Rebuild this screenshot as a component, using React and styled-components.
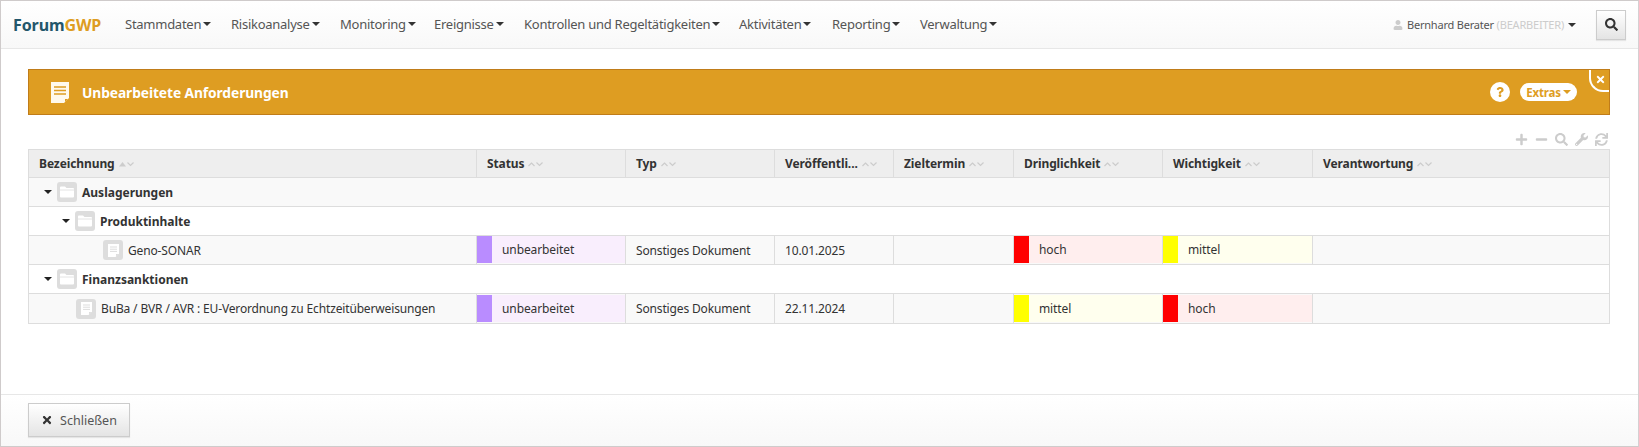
import React from "react";
import styled, { createGlobalStyle } from "styled-components";
import {
  FaUser,
  FaSearch,
  FaTimes,
  FaPlus,
  FaMinus,
  FaWrench,
  FaSync,
  FaQuestion,
} from "react-icons/fa";

const GlobalStyle = createGlobalStyle`
  html, body {
    margin: 0;
    padding: 0;
    background: #fff;
  }
  body {
    font-family: "Noto Sans", "Open Sans", sans-serif;
    font-size: 13px;
    color: #333;
  }
  * { box-sizing: border-box; }
`;

const Page = styled.div`
  height: 447px;
  display: flex;
  flex-direction: column;
  border: 1px solid #cfcbcb;
  border-right-color: #d5d0d2;
`;

const Navbar = styled.nav`
  height: 48px;
  flex: none;
  display: flex;
  align-items: center;
  padding: 0 12px 0 12px;
  background: linear-gradient(#fff, #f8f8f8);
  border-bottom: 1px solid #e7e7e7;
`;

const Brand = styled.div`
  width: 112px;
  font-size: 16px;
  font-weight: 700;
  color: #23566b;
  letter-spacing: -0.1px;
  span {
    color: #de9d22;
  }
`;

const NavItems = styled.div`
  display: flex;
  flex: 1;
  padding-bottom: 2px;
`;

const NavItem = styled.div`
  width: ${(p) => p.$w}px;
  display: flex;
  align-items: center;
  font-size: 13px;
  letter-spacing: -0.26px;
  color: #555;
  white-space: nowrap;
`;

const Caret = styled.span`
  width: 0;
  height: 0;
  flex: none;
  margin-left: ${(p) => p.$gap ?? 2}px;
  border-top: 4px solid ${(p) => p.$color || "#333"};
  border-left: 4px solid transparent;
  border-right: 4px solid transparent;
`;

const UserMenu = styled.div`
  display: flex;
  align-items: center;
  gap: 4px;
  font-size: 11px;
  letter-spacing: -0.2px;
  color: #555;
  margin-right: 20px;
  em {
    font-style: normal;
    color: #ccc;
  }
  svg {
    color: #ccc;
    font-size: 10px;
  }
`;

const SearchButton = styled.button`
  width: 30px;
  height: 30px;
  padding: 0;
  display: flex;
  align-items: center;
  justify-content: center;
  border: 1px solid #ccc;
  background: linear-gradient(#fff, #e4e4e4);
  box-shadow: 0 1px 1px rgba(0, 0, 0, 0.08);
  color: #333;
  font-size: 13px;
`;

const Content = styled.main`
  flex: 1;
  padding: 20px 28px 0 27px;
`;

const Panel = styled.header`
  position: relative;
  height: 46px;
  display: flex;
  align-items: center;
  padding: 0 32px 0 22px;
  background: #de9d22;
  border: 1px solid #c07c19;
  overflow: hidden;
`;

const PanelTitle = styled.h1`
  flex: 1;
  margin: 0 0 0 13px;
  font-size: 13.8px;
  font-weight: 700;
  letter-spacing: -0.1px;
  color: #fff;
`;

const HelpBadge = styled.span`
  width: 20px;
  height: 20px;
  border-radius: 50%;
  background: #fff;
  color: #de9d22;
  display: flex;
  align-items: center;
  justify-content: center;
  font-size: 10px;
  margin-right: 10px;
`;

const ExtrasBadge = styled.span`
  width: 57px;
  height: 18px;
  border-radius: 9px;
  background: #fff;
  color: #de9d22;
  font-size: 11.5px;
  font-weight: 700;
  letter-spacing: -0.2px;
  display: flex;
  align-items: center;
  justify-content: center;
`;

const CloseNotch = styled.span`
  position: absolute;
  top: -1px;
  right: -1px;
  width: 21px;
  height: 23px;
  background: #de9d22;
  border-left: 2px solid #fff;
  border-bottom: 2px solid #fff;
  border-bottom-left-radius: 14px;
  color: #fff;
  font-size: 11px;
  display: flex;
  align-items: center;
  justify-content: center;
`;

const TableTools = styled.div`
  height: 34px;
  display: flex;
  justify-content: flex-end;
  align-items: flex-end;
  gap: 7px;
  padding: 0 2px 3px 0;
  color: #ccc;
  font-size: 13px;
`;

const Table = styled.table`
  width: 100%;
  table-layout: fixed;
  border-collapse: collapse;
  border: 1px solid #ddd;

  tbody tr:last-child td {
    height: 30px;
  }
`;

const HeadCell = styled.th`
  height: 28px;
  padding: 0 10px;
  background: #eee;
  border-left: 1px solid #ddd;
  border-bottom: 1px solid #ddd;
  text-align: left;
  font-size: 12px;
  font-weight: 700;
  letter-spacing: -0.1px;
  color: #333;
  white-space: nowrap;
`;

const HeadInner = styled.div`
  display: flex;
  align-items: center;
  gap: 4px;
`;

const SortMark = styled.svg`
  width: 16px;
  height: 6px;
  flex: none;
`;

const Row = styled.tr`
  background: ${(p) => (p.$striped ? "#f9f9f9" : "#fff")};
`;

const GroupCell = styled.td`
  height: 29px;
  padding: 0 0 0 ${(p) => p.$indent}px;
  border-bottom: 1px solid #ddd;
`;

const Cell = styled.td`
  height: 29px;
  padding: 0 10px;
  border-left: 1px solid #ddd;
  border-bottom: 1px solid #ddd;
  font-size: 12px;
  letter-spacing: -0.15px;
  color: #333;
  white-space: nowrap;
`;

const NameCell = styled(Cell)`
  border-left: 0;
  padding: 0 0 0 ${(p) => p.$indent}px;
`;

const TreeLabel = styled.div`
  display: flex;
  align-items: center;
  font-size: 12px;
  font-weight: ${(p) => (p.$bold ? 700 : 400)};
  color: #333;
  letter-spacing: ${(p) => (p.$bold ? "0" : "-0.15px")};
`;

const Toggle = styled(Caret)`
  margin: 0 5px 0 0;
  border-top-color: #222;
`;

const IconTile = styled.span`
  width: 20px;
  height: 20px;
  border-radius: 3px;
  background: #ddd;
  display: flex;
  align-items: center;
  justify-content: center;
  margin-right: 5px;
  flex: none;
`;

const ColorCell = styled.td`
  height: 29px;
  padding: 0 0 1px;
  border-left: 1px solid #ddd;
  border-bottom: 1px solid #ddd;
`;

const ColorFill = styled.div`
  height: 27px;
  display: flex;
  align-items: center;
  background: ${(p) => p.$bg};
  font-size: 12px;
  letter-spacing: -0.1px;
  color: #333;
  &::before {
    content: "";
    width: 15px;
    height: 100%;
    margin-right: 10px;
    background: ${(p) => p.$color};
  }
`;

const Footer = styled.footer`
  height: 52px;
  flex: none;
  display: flex;
  align-items: center;
  padding-left: 27px;
  padding-bottom: 1px;
  background: linear-gradient(#fff, #f8f8f8);
  border-top: 1px solid #e7e7e7;
`;

const CloseButton = styled.button`
  width: 102px;
  height: 34px;
  display: flex;
  align-items: center;
  justify-content: center;
  gap: 7px;
  padding: 0;
  border: 1px solid #ccc;
  background: linear-gradient(#fff, #e4e4e4);
  box-shadow: 0 1px 1px rgba(0, 0, 0, 0.08);
  font-family: inherit;
  font-size: 12.5px;
  color: #555;
  svg {
    font-size: 12px;
    color: #333;
  }
`;

const SortIcon = ({ active }) => (
  <SortMark viewBox="0 0 16 6">
    {active ? (
      <path d="M0 5.5 L3.5 1 L7 5.5 Z" fill="#ccc" />
    ) : (
      <path d="M.5 5 L3.5 2 L6.5 5" fill="none" stroke="#ccc" strokeWidth="1.2" />
    )}
    <path d="M8.5 1.5 L11.5 4.5 L14.5 1.5" fill="none" stroke="#ccc" strokeWidth="1.2" />
  </SortMark>
);

const FolderIcon = () => (
  <svg width="14" height="12" viewBox="0 0 14 12">
    <path d="M0 1.5 Q0 .5 1 .5 H5 L6.5 2 H13 Q14 2 14 3 V10.5 Q14 11.5 13 11.5 H1 Q0 11.5 0 10.5 Z" fill="#fff" />
    <path d="M0 4 H14" stroke="#ddd" strokeWidth="0.8" />
  </svg>
);

const DocIcon = () => (
  <svg width="11" height="13" viewBox="0 0 11 13">
    <path d="M0 0 H11 V9.5 L7.5 13 H0 Z" fill="#fff" />
    <path d="M2 3 H9 M2 5.2 H9 M2 7.4 H9" stroke="#ddd" strokeWidth="1" />
    <path d="M8 10 H10.5 L8 12.5 Z" fill="#ddd" />
  </svg>
);

const PanelIcon = () => (
  <svg width="18" height="21" viewBox="0 0 18 21">
    <path d="M0 0 H18 V16 L13 21 H0 Z" fill="#fff9ec" />
    <path d="M3 5 H15 M3 8.5 H15 M3 12 H15" stroke="#de9d22" strokeWidth="1.5" />
    <path d="M14 17 H17 L14 20 Z" fill="#de9d22" />
  </svg>
);

const NAV = [
  ["Stammdaten", 106],
  ["Risikoanalyse", 109],
  ["Monitoring", 94],
  ["Ereignisse", 90],
  ["Kontrollen und Regeltätigkeiten", 215],
  ["Aktivitäten", 93],
  ["Reporting", 88],
  ["Verwaltung", 100],
];

const COLUMNS = [
  ["Bezeichnung", 448],
  ["Status", 149],
  ["Typ", 149],
  ["Veröffentli...", 119],
  ["Zieltermin", 120],
  ["Dringlichkeit", 149],
  ["Wichtigkeit", 150],
  ["Verantwortung", null],
];

const LEVELS = {
  hoch: { color: "#ff0000", bg: "#ffeeee" },
  mittel: { color: "#ffff00", bg: "#ffffee" },
};

const Group = ({ name, indent, striped }) => (
  <Row $striped={striped}>
    <GroupCell colSpan={8} $indent={indent}>
      <TreeLabel $bold>
        <Toggle />
        <IconTile>
          <FolderIcon />
        </IconTile>
        {name}
      </TreeLabel>
    </GroupCell>
  </Row>
);

const Item = ({ name, indent, date, urgency, importance }) => (
  <Row $striped>
    <NameCell $indent={indent}>
      <TreeLabel>
        <IconTile>
          <DocIcon />
        </IconTile>
        {name}
      </TreeLabel>
    </NameCell>
    <ColorCell>
      <ColorFill $color="#b98cff" $bg="#f9eefd">unbearbeitet</ColorFill>
    </ColorCell>
    <Cell>Sonstiges Dokument</Cell>
    <Cell>{date}</Cell>
    <Cell />
    <ColorCell>
      <ColorFill $color={LEVELS[urgency].color} $bg={LEVELS[urgency].bg}>{urgency}</ColorFill>
    </ColorCell>
    <ColorCell>
      <ColorFill $color={LEVELS[importance].color} $bg={LEVELS[importance].bg}>{importance}</ColorFill>
    </ColorCell>
    <Cell />
  </Row>
);

export default function App() {
  return (
    <Page>
      <GlobalStyle />
      <Navbar>
        <Brand>
          Forum<span>GWP</span>
        </Brand>
        <NavItems>
          {NAV.map(([label, w]) => (
            <NavItem key={label} $w={w}>
              {label}
              <Caret />
            </NavItem>
          ))}
        </NavItems>
        <UserMenu>
          <FaUser />
          <span>
            Bernhard Berater <em>(BEARBEITER)</em>
          </span>
          <Caret $gap={0} />
        </UserMenu>
        <SearchButton>
          <FaSearch />
        </SearchButton>
      </Navbar>

      <Content>
        <Panel>
          <PanelIcon />
          <PanelTitle>Unbearbeitete Anforderungen</PanelTitle>
          <HelpBadge>
            <FaQuestion />
          </HelpBadge>
          <ExtrasBadge>
            Extras
            <Caret $color="#de9d22" />
          </ExtrasBadge>
          <CloseNotch>
            <FaTimes />
          </CloseNotch>
        </Panel>

        <TableTools>
          <FaPlus />
          <FaMinus />
          <FaSearch />
          <FaWrench />
          <FaSync />
        </TableTools>

        <Table>
          <colgroup>
            {COLUMNS.map(([label, w]) => (
              <col key={label} style={w ? { width: w } : undefined} />
            ))}
          </colgroup>
          <thead>
            <tr>
              {COLUMNS.map(([label], i) => (
                <HeadCell key={label}>
                  <HeadInner>
                    {label}
                    <SortIcon active={i === 0} />
                  </HeadInner>
                </HeadCell>
              ))}
            </tr>
          </thead>
          <tbody>
            <Group name="Auslagerungen" indent={15} striped />
            <Group name="Produktinhalte" indent={33} />
            <Item name="Geno-SONAR" indent={74} date="10.01.2025" urgency="hoch" importance="mittel" />
            <Group name="Finanzsanktionen" indent={15} />
            <Item
              name="BuBa / BVR / AVR : EU-Verordnung zu Echtzeitüberweisungen"
              indent={47}
              date="22.11.2024"
              urgency="mittel"
              importance="hoch"
            />
          </tbody>
        </Table>
      </Content>

      <Footer>
        <CloseButton>
          <FaTimes />
          Schließen
        </CloseButton>
      </Footer>
    </Page>
  );
}
